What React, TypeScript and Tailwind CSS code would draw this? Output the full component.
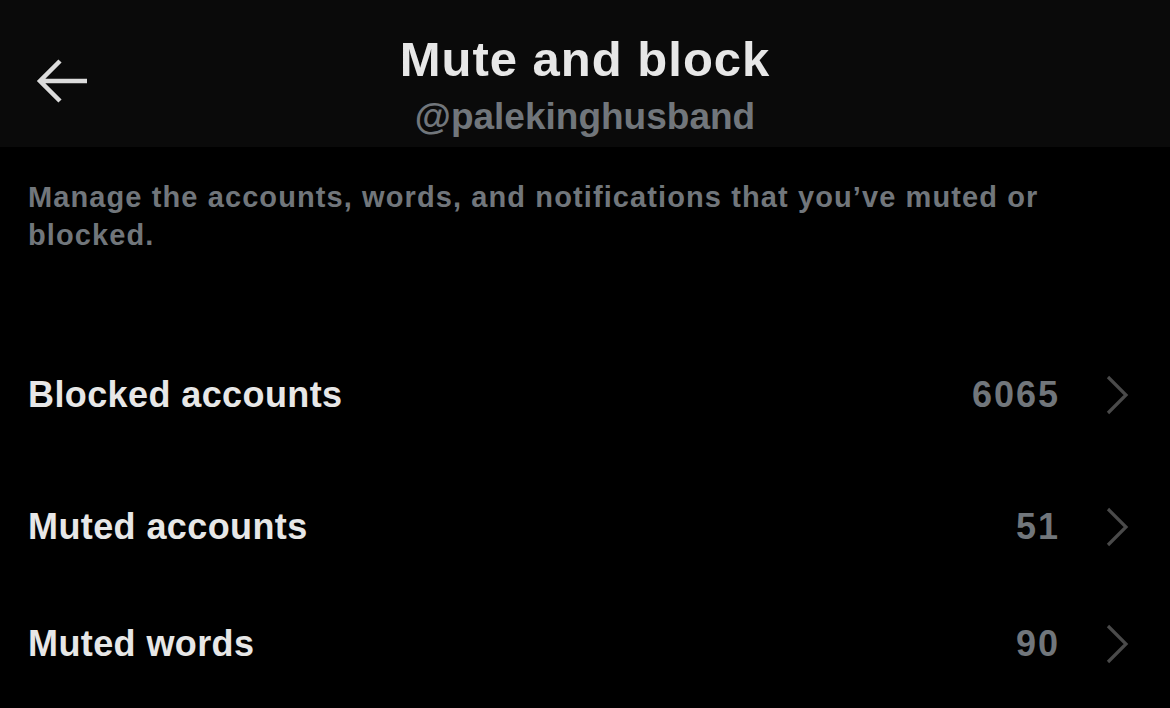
import { useState } from 'react';

type Row = {
  label: string;
  count: string;
  spacing: string;
};

const rows: Row[] = [
  { label: 'Blocked accounts', count: '6065', spacing: 'mt-[119px]' },
  { label: 'Muted accounts', count: '51', spacing: 'mt-[88px]' },
  { label: 'Muted words', count: '90', spacing: 'mt-[73px]' },
];

const BackArrow = () => (
  <svg width="56" height="48" viewBox="0 0 56 48" fill="none" className="block">
    <path
      d="M26 4 L6 24 L26 44 M6 24 H53"
      stroke="#dcdcdc"
      strokeWidth="4.5"
      strokeLinecap="butt"
      strokeLinejoin="miter"
    />
  </svg>
);

const Chevron = () => (
  <svg width="24" height="40" viewBox="0 0 24 40" fill="none" className="block">
    <path d="M3 2 L21 20 L3 38" stroke="#4a4a4a" strokeWidth="3.2" />
  </svg>
);

export default function App() {
  const [active, setActive] = useState<string | null>(null);

  return (
    <div
      className="w-[1170px] h-[708px] bg-black overflow-hidden font-bold"
      style={{ fontFamily: '"Liberation Sans", Arial, sans-serif' }}
    >
      <header className="relative h-[147px] bg-[#0a0a0a] flex flex-col items-center pt-[32px]">
        <button className="absolute left-[34px] top-[57px]" aria-label="Back">
          <BackArrow />
        </button>
        <h1 className="text-[49px] leading-[54px] tracking-[1px] text-[#e7e7e7]">Mute and block</h1>
        <p className="mt-[9px] text-[37px] leading-[44px] text-[#71767b]">@palekinghusband</p>
      </header>

      <p className="mt-[31px] px-[28px] text-[29px] leading-[38px] tracking-[1.1px] text-[#71767b]">
        Manage the accounts, words, and notifications that you’ve muted or blocked.
      </p>

      <ul>
        {rows.map((row) => (
          <li
            key={row.label}
            onClick={() => setActive(row.label)}
            className={`${row.spacing} flex items-center h-[44px] pl-[28px] pr-[41px] cursor-pointer ${
              active === row.label ? 'bg-[#0a0a0a]' : ''
            }`}
          >
            <span className="flex-1 text-[36px] leading-[44px] tracking-[0.4px] text-[#e7e7e7]">
              {row.label}
            </span>
            <span className="text-[36px] leading-[44px] tracking-[2px] text-[#71767b] mr-[45px]">
              {row.count}
            </span>
            <Chevron />
          </li>
        ))}
      </ul>
    </div>
  );
}
